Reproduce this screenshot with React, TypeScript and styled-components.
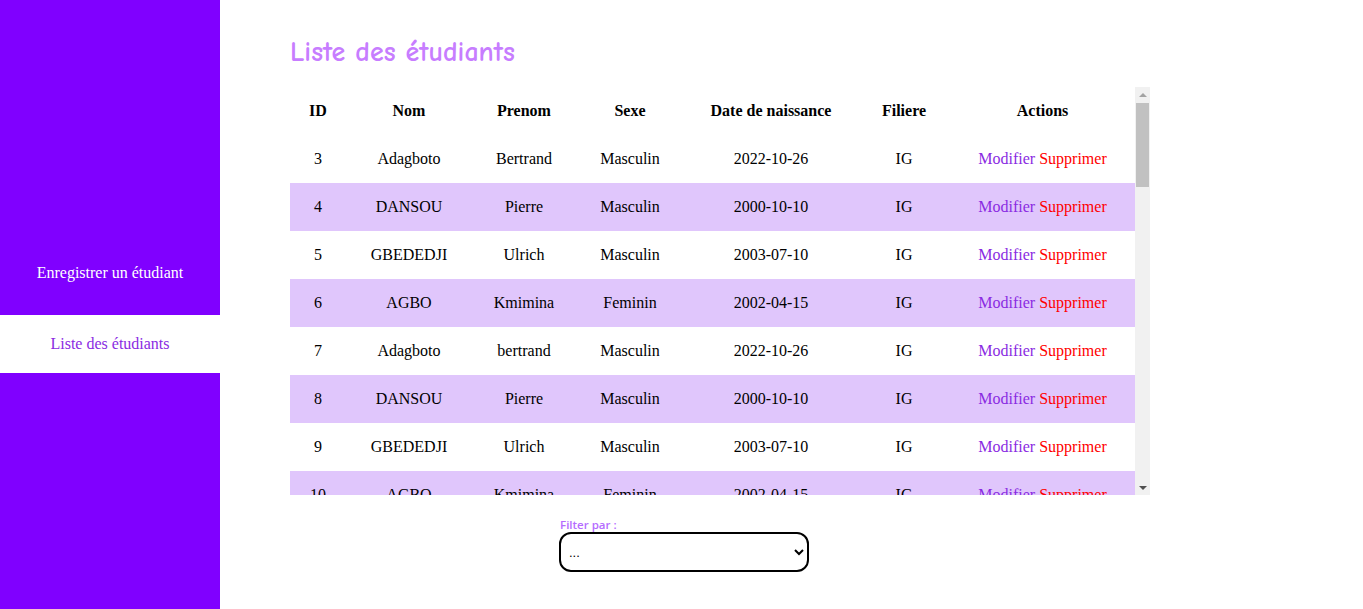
import React from "react";
import styled, { createGlobalStyle } from "styled-components";

const Global = createGlobalStyle`
  html, body { margin: 0; padding: 0; background: #fff; }
  body { font-family: "Liberation Serif", "Times New Roman", serif; }
`;

const Page = styled.div`
  display: flex;
  height: 609px;
  overflow: hidden;
`;

const Sidebar = styled.nav`
  width: 220px;
  flex-shrink: 0;
  background: #8000ff;
  display: flex;
  flex-direction: column;
  gap: 13px;
  padding-top: 244px;
  box-sizing: border-box;
`;

const NavItem = styled.div<{ $active?: boolean }>`
  height: 58px;
  display: flex;
  align-items: center;
  justify-content: center;
  font-size: 16px;
  color: ${(p) => (p.$active ? "#8a2be2" : "#ffffff")};
  background: ${(p) => (p.$active ? "#ffffff" : "transparent")};
`;

const Main = styled.main`
  flex: 1;
  padding: 36px 0 0 70px;
  display: flex;
  flex-direction: column;
`;

const Title = styled.h2`
  margin: 0 0 18px;
  font-family: "Comic Sans MS", "Comic Neue", "Lato", cursive;
  font-weight: 700;
  font-size: 28px;
  line-height: 33px;
  color: #c77dff;
`;

const TableFrame = styled.div`
  display: flex;
  width: 860px;
  height: 408px;
`;

const Viewport = styled.div`
  width: 845px;
  height: 100%;
  overflow: hidden;
`;

const ScrollTrack = styled.div`
  width: 15px;
  height: 100%;
  background: #f1f1f1;
  display: flex;
  flex-direction: column;
  align-items: center;
`;

const ArrowButton = styled.div<{ $down?: boolean }>`
  width: 15px;
  height: 15px;
  flex-shrink: 0;
  display: flex;
  align-items: center;
  justify-content: center;
  &::before {
    content: "";
    width: 0;
    height: 0;
    border-left: 4px solid transparent;
    border-right: 4px solid transparent;
    ${(p) =>
      p.$down
        ? "border-top: 4px solid #505050;"
        : "border-bottom: 4px solid #a3a3a3;"}
  }
`;

const Thumb = styled.div`
  width: 13px;
  height: 84px;
  margin-top: 1px;
  background: #c1c1c1;
  flex-shrink: 0;
`;

const TrackSpace = styled.div`
  flex: 1;
`;

const Table = styled.table`
  width: 845px;
  border-collapse: collapse;
  table-layout: fixed;
  font-size: 16px;
  color: #000;
`;

const Row = styled.tr<{ $alt?: boolean }>`
  height: 48px;
  background: ${(p) => (p.$alt ? "#e0c6fc" : "transparent")};
`;

const Th = styled.th`
  font-weight: 700;
  text-align: center;
  padding: 0;
`;

const Td = styled.td`
  text-align: center;
  padding: 0;
`;

const ActionLink = styled.span<{ $danger?: boolean }>`
  color: ${(p) => (p.$danger ? "#ff0000" : "#8a2be2")};
  cursor: pointer;
`;

const Filter = styled.div`
  display: flex;
  flex-direction: column;
  margin: 23px 0 0 269px;
  width: 250px;
`;

const FilterLabel = styled.label`
  font-family: "Open Sans", "Noto Sans", sans-serif;
  font-size: 11.5px;
  font-weight: 600;
  color: #b56cff;
  line-height: 14px;
  padding-left: 1px;
`;

const Select = styled.select`
  width: 250px;
  height: 40px;
  border: 2px solid #000;
  border-radius: 12px;
  background: #fff;
  font-size: 13px;
  padding: 0 4px;
  color: #000;
  box-sizing: border-box;
`;

const students = [
  [3, "Adagboto", "Bertrand", "Masculin", "2022-10-26", "IG"],
  [4, "DANSOU", "Pierre", "Masculin", "2000-10-10", "IG"],
  [5, "GBEDEDJI", "Ulrich", "Masculin", "2003-07-10", "IG"],
  [6, "AGBO", "Kmimina", "Feminin", "2002-04-15", "IG"],
  [7, "Adagboto", "bertrand", "Masculin", "2022-10-26", "IG"],
  [8, "DANSOU", "Pierre", "Masculin", "2000-10-10", "IG"],
  [9, "GBEDEDJI", "Ulrich", "Masculin", "2003-07-10", "IG"],
  [10, "AGBO", "Kmimina", "Feminin", "2002-04-15", "IG"],
];

const widths = [56, 126, 104, 108, 174, 92, 185];

export default function App() {
  return (
    <>
      <Global />
      <Page>
        <Sidebar>
          <NavItem>Enregistrer un étudiant</NavItem>
          <NavItem $active>Liste des étudiants</NavItem>
        </Sidebar>
        <Main>
          <Title>Liste des étudiants</Title>
          <TableFrame>
            <Viewport>
              <Table>
                <colgroup>
                  {widths.map((w, i) => (
                    <col key={i} style={{ width: w }} />
                  ))}
                </colgroup>
                <thead>
                  <Row>
                    <Th>ID</Th>
                    <Th>Nom</Th>
                    <Th>Prenom</Th>
                    <Th>Sexe</Th>
                    <Th>Date de naissance</Th>
                    <Th>Filiere</Th>
                    <Th>Actions</Th>
                  </Row>
                </thead>
                <tbody>
                  {students.map((s, i) => (
                    <Row key={i} $alt={i % 2 === 1}>
                      {s.map((v, j) => (
                        <Td key={j}>{v}</Td>
                      ))}
                      <Td>
                        <ActionLink>Modifier</ActionLink>{" "}
                        <ActionLink $danger>Supprimer</ActionLink>
                      </Td>
                    </Row>
                  ))}
                </tbody>
              </Table>
            </Viewport>
            <ScrollTrack>
              <ArrowButton />
              <Thumb />
              <TrackSpace />
              <ArrowButton $down />
            </ScrollTrack>
          </TableFrame>
          <Filter>
            <FilterLabel>Filter par :</FilterLabel>
            <Select defaultValue="">
              <option value="">...</option>
              <option value="ig">IG</option>
            </Select>
          </Filter>
        </Main>
      </Page>
    </>
  );
}
